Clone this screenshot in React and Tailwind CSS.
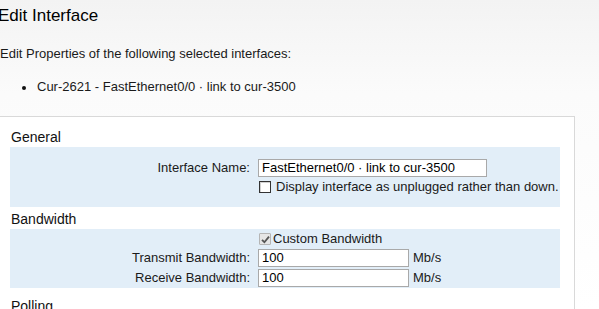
import React from 'react'

const FONT = "font-['Liberation_Sans',Arial,sans-serif]"

function Checkbox({ checked }) {
  if (checked) {
    return (
      <span className="inline-flex w-[12px] h-[12px] items-center justify-center border border-[#b5b5b5] bg-[#e6e6e6] rounded-[1px]">
        <svg width="9" height="9" viewBox="0 0 9 9">
          <path d="M1 4.8 L3.4 7.2 L8 1.6" fill="none" stroke="#555" strokeWidth="1.8" />
        </svg>
      </span>
    )
  }
  return (
    <span className="inline-block w-[12px] h-[12px] border border-[#333] bg-white shadow-[inset_1px_1px_0_#d0d0d0]" />
  )
}

function Field({ label, children }) {
  return (
    <div className="flex items-center">
      <div className="w-[240px] text-right">{label}</div>
      <div className="ml-[8px] flex items-center">{children}</div>
    </div>
  )
}

function TextBox({ value, width }) {
  return (
    <div
      className={`${width} h-[18px] border border-[#a9a9a9] bg-white pl-[3px] leading-[16px] text-black whitespace-nowrap overflow-hidden`}
    >
      {value}
    </div>
  )
}

function Heading({ children, className = '' }) {
  return (
    <h2 className={`h-[22px] leading-[24px] text-[14px] text-[#111] pl-px ${className}`}>{children}</h2>
  )
}

export default function App() {
  return (
    <div className={`w-[599px] h-[309px] overflow-hidden bg-gradient-to-b from-[#f3f3f3] via-[#fbfbfb] via-30% to-white text-[#1a1a1a] ${FONT}`}>
      {/* Header */}
      <h1 className="pt-[6px] -ml-[2px] text-[17px] leading-[20px] text-black">Edit Interface</h1>
      <p className="mt-[20px] text-[13px] leading-[16px]">Edit Properties of the following selected interfaces:</p>
      <div className="mt-[17px] flex items-center text-[13px] leading-[16px]">
        <span className="ml-[22px] w-[4px] h-[4px] rounded-full bg-[#111] mt-[2px]" />
        <span className="ml-[11px]">Cur-2621 - FastEthernet0/0 · link to cur-3500</span>
      </div>

      {/* Properties panel */}
      <div className="mt-[21px] w-[575px] border-t border-r border-[#d9d9d9] bg-white pt-[8px] pl-[10px] pr-[14px] text-[13px] leading-[16px]">
        <Heading>General</Heading>
        <div className="bg-[#e2eef8] pt-[12px] pb-[12px]">
          <Field label="Interface Name:">
            <TextBox value="FastEthernet0/0 · link to cur-3500" width="w-[229px]" />
          </Field>
          <div className="mt-[2px] ml-[249px] flex items-center h-[16px]">
            <Checkbox />
            <span className="ml-[5px]">Display interface as unplugged rather than down.</span>
          </div>
        </div>

        <Heading>Bandwidth</Heading>
        <div className="bg-[#e2eef8] pt-[2px] pb-px space-y-[2px]">
          <div className="ml-[249px] flex items-center h-[16px]">
            <Checkbox checked />
            <span className="ml-[2px]">Custom Bandwidth</span>
          </div>
          <Field label="Transmit Bandwidth:">
            <TextBox value="100" width="w-[151px]" />
            <span className="ml-[4px]">Mb/s</span>
          </Field>
          <Field label="Receive Bandwidth:">
            <TextBox value="100" width="w-[151px]" />
            <span className="ml-[4px]">Mb/s</span>
          </Field>
        </div>

        <Heading className="mt-[6px]">Polling</Heading>
        <div className="h-[40px]" />
      </div>
    </div>
  )
}
